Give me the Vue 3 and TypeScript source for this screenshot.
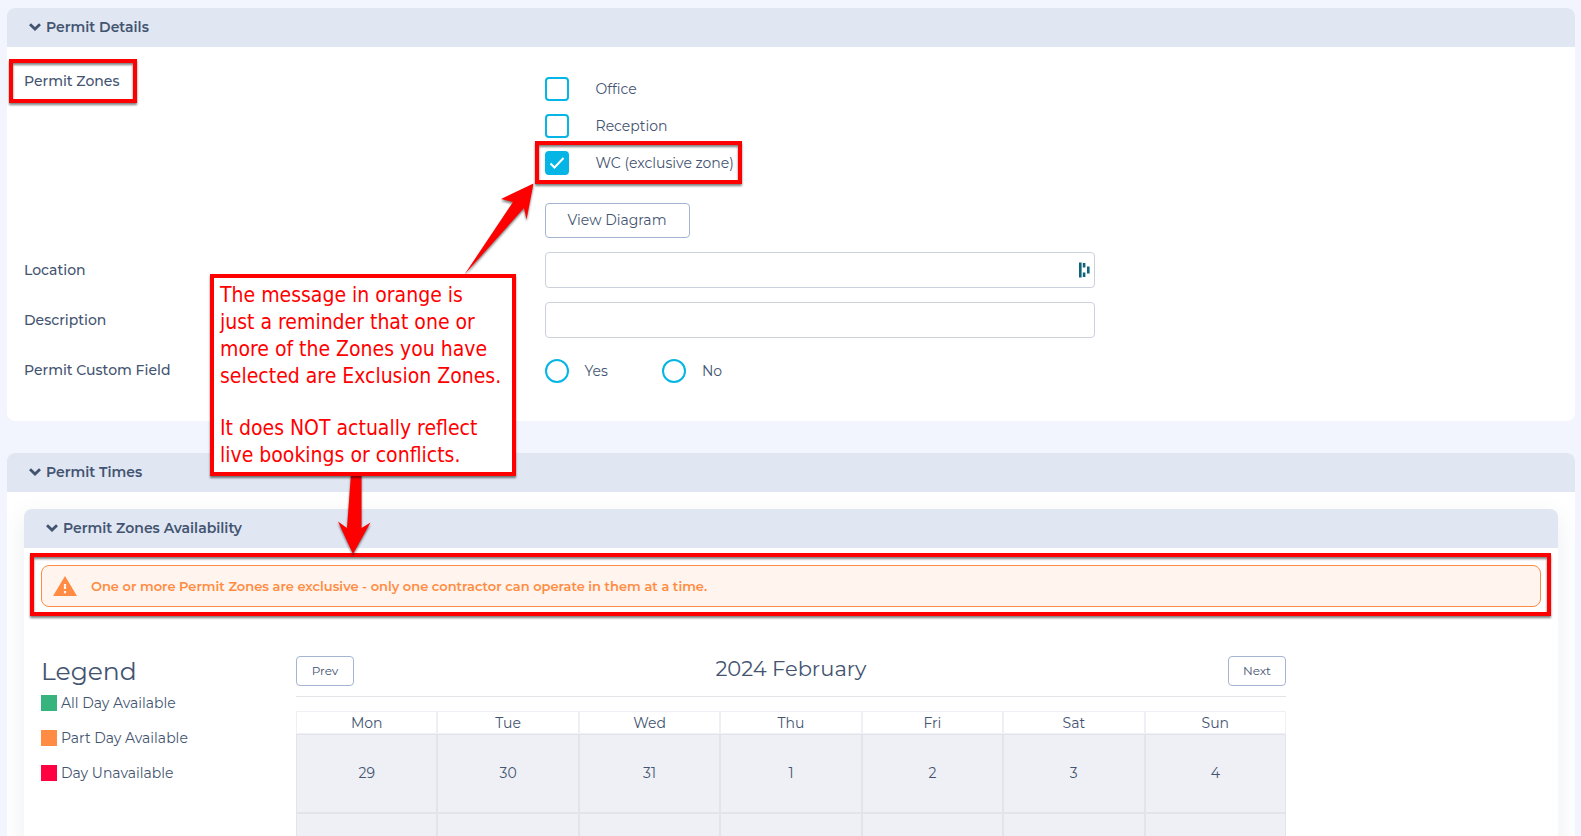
<script setup lang="ts">
import { ref } from 'vue'

interface Zone {
  id: string
  label: string
  exclusive: boolean
}

const zones: Zone[] = [
  { id: 'office', label: 'Office', exclusive: false },
  { id: 'reception', label: 'Reception', exclusive: false },
  { id: 'wc', label: 'WC (exclusive zone)', exclusive: true },
]
const selected = ref<string[]>(['wc'])
const location = ref('')
const description = ref('')
const custom = ref('')

const legend = [
  { label: 'All Day Available', tone: 'free' },
  { label: 'Part Day Available', tone: 'part' },
  { label: 'Day Unavailable', tone: 'full' },
]
const weekdays = ['Mon', 'Tue', 'Wed', 'Thu', 'Fri', 'Sat', 'Sun']
const days = [29, 30, 31, 1, 2, 3, 4]
</script>

<template>
  <main class="page">
    <section class="panel">
      <h2 class="panel-head">
        <svg class="chevron" viewBox="0 0 12 8" aria-hidden="true"><path d="M1 1.200 6 6l5-4.800" /></svg>
        Permit Details
      </h2>
      <div class="form">
        <div class="row zones-row">
          <span id="zones-label" class="label"><span class="marked marked-label">Permit Zones</span></span>
          <div class="control">
            <div class="zones" role="group" aria-labelledby="zones-label">
              <label v-for="z in zones" :key="z.id" class="zone" :class="{ marked: z.exclusive, 'marked-zone': z.exclusive }">
                <input v-model="selected" type="checkbox" class="check" :value="z.id" />
                <span>{{ z.label }}</span>
              </label>
            </div>
            <button type="button" class="btn diagram">View Diagram</button>
          </div>
        </div>
        <div class="row">
          <label class="label" for="location">Location</label>
          <div class="control field">
            <input id="location" v-model="location" type="text" class="text" />
            <svg class="fill-icon" viewBox="0 0 11 16" aria-hidden="true">
              <path d="M0 0.500h2.600v15H0zM3.800 1h2.600v4.500H3.800zM3.800 10.500h2.600V15H3.800zM8 4.600h2.600v7H8z" />
            </svg>
          </div>
        </div>
        <div class="row">
          <label class="label" for="description">Description</label>
          <div class="control">
            <input id="description" v-model="description" type="text" class="text" />
          </div>
        </div>
        <div class="row">
          <span id="custom-label" class="label">Permit Custom Field</span>
          <div class="control radios" role="radiogroup" aria-labelledby="custom-label">
            <label v-for="o in ['Yes', 'No']" :key="o" class="radio-item">
              <input v-model="custom" type="radio" name="custom" class="radio" :value="o" />
              <span>{{ o }}</span>
            </label>
          </div>
        </div>
      </div>
    </section>

    <section class="panel times">
      <h2 class="panel-head">
        <svg class="chevron" viewBox="0 0 12 8" aria-hidden="true"><path d="M1 1.200 6 6l5-4.800" /></svg>
        Permit Times
      </h2>
      <section class="subpanel">
        <h3 class="panel-head">
          <svg class="chevron" viewBox="0 0 12 8" aria-hidden="true"><path d="M1 1.200 6 6l5-4.800" /></svg>
          Permit Zones Availability
        </h3>
        <div class="alert marked marked-alert" role="alert">
          <svg class="warn" viewBox="0 0 24 20" aria-hidden="true">
            <path d="M12 0 24 20H0Z" />
            <path class="bang" d="M10.900 8h2.200v5h-2.200zM10.900 15h2.200v2.200h-2.200z" />
          </svg>
          <span>One or more Permit Zones are exclusive - only one contractor can operate in them at a time.</span>
        </div>
        <div class="availability">
          <aside>
            <h4 class="legend-title">Legend</h4>
            <ul class="legend">
              <li v-for="l in legend" :key="l.tone"><i class="swatch" :class="l.tone"></i>{{ l.label }}</li>
            </ul>
          </aside>
          <div>
            <div class="cal-head">
              <button type="button" class="btn small">Prev</button>
              <h4 class="month">2024 February</h4>
              <button type="button" class="btn small">Next</button>
            </div>
            <table class="calendar">
              <thead>
                <tr><th v-for="d in weekdays" :key="d" scope="col">{{ d }}</th></tr>
              </thead>
              <tbody>
                <tr><td v-for="d in days" :key="d">{{ d }}</td></tr>
                <tr><td v-for="d in days" :key="d"></td></tr>
              </tbody>
            </table>
          </div>
        </div>
      </section>
    </section>

    <svg class="arrows" width="600" height="600" aria-hidden="true">
      <path d="M464.500 274.500 513 202 501 199 533.500 183.500 526.500 219.500 524 208Z" />
      <path d="M351 474 347 528 338 521.500 353 554 370.500 522.500 361.500 528V474Z" />
    </svg>
    <div class="callout">
      <p>The message in orange is<br />just a reminder that one or<br />more of the Zones you have<br />selected are Exclusion Zones.</p>
      <p>It does NOT actually reflect<br />live bookings or conflicts.</p>
    </div>
  </main>
</template>

<style>
body {
  margin: 0;
  background: #f2f5fe;
}
</style>

<style scoped>
* {
  box-sizing: border-box;
}
.page {
  position: relative;
  height: 100vh;
  overflow: hidden;
  padding: 8px 6px 0 7px;
  color: #435471;
  font-family: Montserrat, Inter, "Noto Sans", sans-serif;
  font-size: 14px;
  line-height: 20px;
}
h2, h3, h4, p, ul {
  margin: 0;
  padding: 0;
}
.panel {
  background: #fff;
  border-radius: 8px;
  overflow: hidden;
}
.panel-head {
  display: flex;
  align-items: center;
  gap: 5px;
  height: 39px;
  padding: 0 22px 2px;
  background: #e0e6f2;
  font-size: 14px;
  font-weight: 600;
}
.chevron {
  width: 12px;
  height: 8px;
  fill: none;
  stroke: currentColor;
  stroke-width: 2.8;
}
.form {
  display: grid;
  gap: 14px;
  padding: 24px 20px 31px 17px;
}
.row {
  display: grid;
  grid-template-columns: 34% minmax(0, 550px);
}
.label {
  padding-top: 8px;
  font-weight: 500;
}
.zones-row .label {
  padding-top: 0;
}
.zones {
  display: grid;
  gap: 13px;
  padding-top: 6px;
}
.zone {
  display: flex;
  align-items: center;
  gap: 27px;
  width: max-content;
}
.check, .radio {
  appearance: none;
  flex: none;
  width: 24px;
  height: 24px;
  margin: 0;
  border: 2px solid #05b5e5;
  border-radius: 4px;
  background: #fff;
}
.check:checked {
  background: #05b5e5 url("data:image/svg+xml,%3Csvg xmlns='http://www.w3.org/2000/svg' viewBox='0 0 20 20'%3E%3Cpath d='M3.500 10.500 7.500 14.500 16.500 5' fill='none' stroke='white' stroke-width='2'/%3E%3C/svg%3E") center / 20px 20px no-repeat;
}
.radio {
  border-radius: 50%;
}
.radio:checked {
  background: #05b5e5;
  box-shadow: inset 0 0 0 4px #fff;
}
.btn {
  border: 1px solid #a5b4d0;
  border-radius: 4px;
  background: #fff;
  color: inherit;
  font: inherit;
}
.diagram {
  display: block;
  min-width: 145px;
  height: 35px;
  margin-top: 28px;
  padding-bottom: 2px;
}
.field {
  position: relative;
}
.text {
  display: block;
  width: 100%;
  height: 36px;
  padding: 0 12px;
  border: 1px solid #cdd1db;
  border-radius: 4px;
  background: #fff;
  color: inherit;
  font: inherit;
}
.fill-icon {
  position: absolute;
  top: 10px;
  right: 5px;
  width: 11px;
  height: 16px;
  fill: #0e6478;
}
.radios {
  display: flex;
  align-items: center;
  gap: 54px;
  height: 38px;
}
.radio-item {
  display: flex;
  align-items: center;
  gap: 16px;
}
.times {
  margin-top: 32px;
}
.subpanel {
  margin: 17px;
  border-radius: 8px;
  background: #fff;
  box-shadow: 0 8px 24px rgba(67, 84, 113, 0.1);
}
.subpanel .panel-head {
  border-radius: 8px 8px 0 0;
}
.alert {
  display: flex;
  align-items: center;
  gap: 14px;
  height: 42px;
  margin: 17px 17px 0;
  padding: 0 11px 1px;
  border: 1px solid #ff8c42;
  border-radius: 8px;
  background: #fff4ee;
  color: #ff8c42;
  font-size: 13px;
  font-weight: 600;
}
.warn {
  width: 24px;
  height: 20px;
  fill: #ff8c42;
}
.warn .bang {
  fill: #fff4ee;
}
.availability {
  display: grid;
  grid-template-columns: 17% 66%;
  margin: 49px 17px 0;
}
.legend-title {
  font-size: 25px;
  font-weight: 400;
  line-height: 30px;
}
.legend {
  display: grid;
  gap: 15px;
  margin-top: 7px;
  list-style: none;
}
.legend li {
  display: flex;
  align-items: center;
  gap: 4px;
}
.swatch {
  width: 16px;
  height: 16px;
}
.free {
  background: #37b37e;
}
.part {
  background: #ff8c42;
}
.full {
  background: #ff0040;
}
.cal-head {
  display: flex;
  justify-content: space-between;
  padding-bottom: 10px;
  border-bottom: 1px solid #e2e4e8;
}
.small {
  min-width: 58px;
  height: 30px;
  padding: 0 14px;
  font-size: 12px;
}
.month {
  font-size: 21px;
  font-weight: 400;
  line-height: 26px;
}
.calendar {
  width: 100%;
  margin-top: 14px;
  border-spacing: 0;
  table-layout: fixed;
  text-align: center;
}
.calendar th {
  height: 23px;
  padding: 0;
  border: 1px solid #eff0f5;
  font-weight: 400;
}
.calendar td {
  height: 79px;
  padding: 0 0 2px;
  border: 1px solid #e3e4e9;
  background: #eff0f5;
}
.marked {
  position: relative;
}
.marked::after {
  content: "";
  position: absolute;
  border: 4px solid #f00;
  filter: drop-shadow(0 2px 1px rgba(0, 0, 0, 0.5));
  pointer-events: none;
}
.marked-label::after {
  inset: -13px -18px -13px -15px;
}
.marked-zone::after {
  inset: -10px -8px -9px -10px;
}
.marked-alert::after {
  inset: -13px -11px -10px -12px;
}
.arrows {
  position: absolute;
  top: 0;
  left: 0;
  fill: #f00;
  filter: drop-shadow(0 2px 1px rgba(0, 0, 0, 0.5));
  pointer-events: none;
}
.callout {
  position: absolute;
  top: 274px;
  left: 210px;
  padding: 4px 6px 3px;
  width: 306px;
  border: 4px solid #f00;
  background: #fff;
  box-shadow: 0 2px 2px rgba(0, 0, 0, 0.5);
  color: #f00;
  font-family: Tahoma, "DejaVu Sans Condensed", "DejaVu Sans", sans-serif;
  font-size: 21px;
  line-height: 27px;
  white-space: nowrap;
}
.callout p + p {
  margin-top: 25px;
}
</style>
